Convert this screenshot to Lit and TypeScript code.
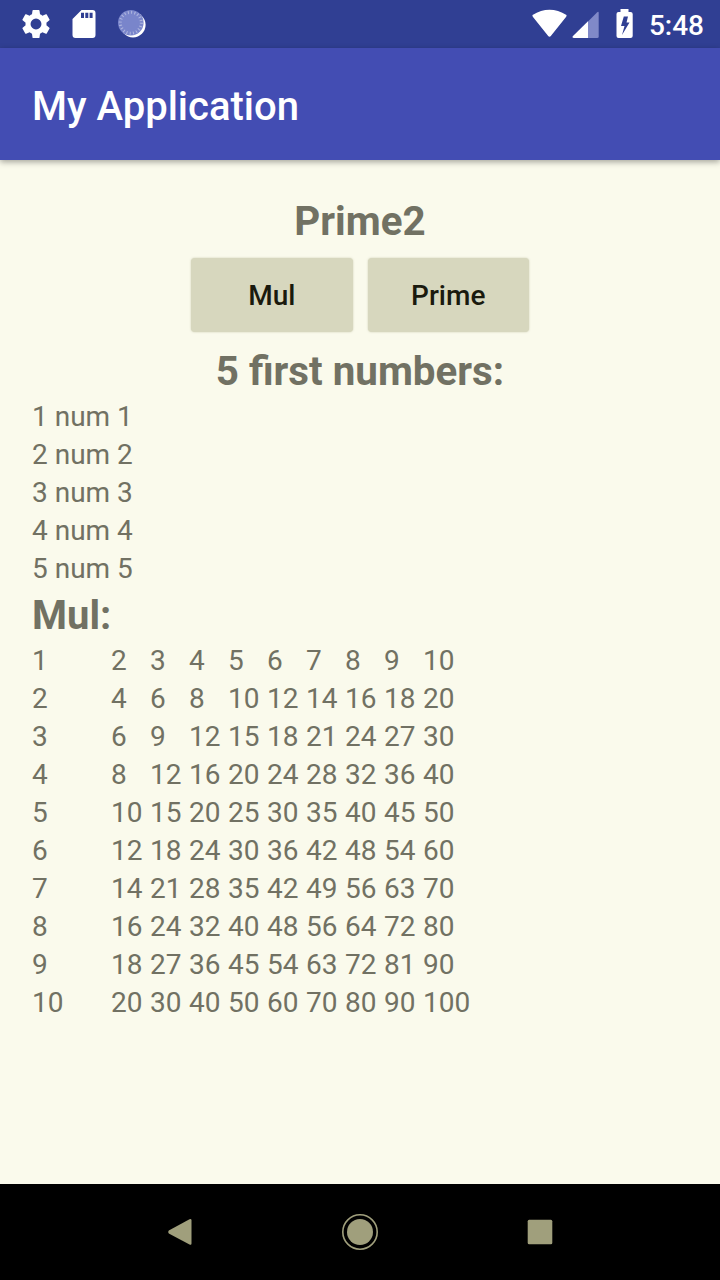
import { LitElement, html, css } from "lit";
import { customElement } from "lit/decorators.js";

const indexes = (n: number) => Array.from({ length: n }, (_, i) => i + 1);

@customElement("status-bar")
class StatusBar extends LitElement {
  static styles = css`
    :host { display: flex; justify-content: space-between; height: 48px; background: #303f93; color: #fff; }
    svg { display: block; }
    .clock { font: 500 28px/52px Roboto, sans-serif; padding-right: 16px; }
    .side { display: flex; }
  `;
  render() {
    return html`
      <svg width="160" height="48" fill="#fff">
        <path transform="translate(19.2 7.2) scale(1.4)" d="M19.43 12.98c.04-.32.07-.64.07-.98s-.03-.66-.07-.98l2.11-1.65c.19-.15.24-.42.12-.64l-2-3.46c-.12-.22-.39-.3-.61-.22l-2.49 1c-.52-.4-1.08-.73-1.69-.98l-.38-2.65A.49.49 0 0 0 14 2h-4c-.25 0-.46.18-.49.42l-.38 2.65c-.61.25-1.17.59-1.69.98l-2.49-1c-.23-.09-.49 0-.61.22l-2 3.46c-.13.22-.07.49.12.64l2.11 1.65c-.04.32-.07.65-.07.98s.03.66.07.98l-2.11 1.65c-.19.15-.24.42-.12.64l2 3.46c.12.22.39.3.61.22l2.49-1c.52.4 1.08.73 1.69.98l.38 2.65c.03.24.24.42.49.42h4c.25 0 .46-.18.49-.42l.38-2.65c.61-.25 1.17-.59 1.69-.98l2.49 1c.23.09.49 0 .61-.22l2-3.46c.12-.22.07-.49-.12-.64zM12 15.9a3.9 3.9 0 1 1 0-7.800 3.9 3.9 0 0 1 0 7.800z" />
        <path fill-rule="evenodd" d="M81.500 10H92.500Q95.500 10 95.500 13V35Q95.500 38 92.500 38H75.500Q72.500 38 72.500 35V19zM81 12.800V18H84V12.800zM85.300 12.800V18H88.300V12.800zM89.600 12.800V18H92.600V12.800z" />
        <circle cx="133" cy="24.800" r="12.600" />
        <circle cx="130.800" cy="22.800" r="12.800" fill="#7985cb" />
        <circle cx="130.800" cy="22.800" r="10.500" fill="none" stroke="#b0b7df" stroke-width="3" stroke-dasharray="1 2.300" />
      </svg>
      <div class="side">
        <svg width="122" height="48" fill="#fff">
          <g transform="translate(1.500 0)">
            <path d="M4 15Q21 4.500 38 15Q38.300 16 37.500 17L22.500 35.800Q21 37.800 19.500 35.800L4.500 17Q3.700 16 4 15z" />
            <path fill="#8089c8" d="M59 38V22L68.500 12.500Q70.200 11 70.200 13V36.500Q70.200 38 68.700 38z" />
            <path d="M45.500 38Q43 37.500 44.500 36L59.500 21.200V38z" />
            <path fill-rule="evenodd" d="M92 9H100V12H102Q104.200 12 104.200 14V36Q104.200 38 102 38H90Q88 38 88 36V14Q88 12 90 12H92zM95.300 16.500L92.500 26H96L93.500 35L101 22.500H98L99.500 16.500z" />
          </g>
        </svg>
        <div class="clock">5:48</div>
      </div>`;
  }
}

@customElement("nav-bar")
class NavBar extends LitElement {
  static styles = css`
    :host { display: flex; justify-content: center; height: 96px; background: #000; }
  `;
  render() {
    return html`
      <svg width="420" height="96" fill="#a09f7c">
        <path d="M18.800 46.500L39.500 35.200Q41.500 34.500 41.500 36.500V59.500Q41.500 61.500 39.500 60.500L18.800 49.500Q17.500 48 18.800 46.500z" />
        <circle cx="210" cy="48" r="13" />
        <circle cx="210" cy="48" r="17.200" fill="none" stroke="#a09f7c" stroke-width="1.600" />
        <rect x="377.700" y="35.700" width="24.600" height="24.600" rx="1.500" />
      </svg>`;
  }
}

@customElement("app-root")
class AppRoot extends LitElement {
  static styles = css`
    :host { display: flex; flex-direction: column; height: 1280px; background: #fafaec; color: #717163; font: 28px/38px Roboto, sans-serif; }
    .bar { height: 112px; background: #434db3; color: #fff; font: 500 40px/118px Roboto, sans-serif; padding-left: 32px; box-shadow: 0 2px 6px rgba(0, 0, 0, 0.35); }
    .content { flex: 1; padding: 33px 32px 0; }
    h2 { margin: 0; font: 700 40px/54px Roboto, sans-serif; }
    .center { text-align: center; font-size: 40.35px; }
    .first { line-height: 58px; }
    .sub { margin-bottom: -1px; }
    .mul { height: 54px; line-height: 56px; }
    .buttons { display: flex; justify-content: center; gap: 15px; padding: 7px 0 13px; }
    button { width: 161.5px; height: 74px; padding: 2px 0 0; border: 0; border-radius: 4px; background: #d7d7be; color: #1a1a0e; font: 500 28px/72px Roboto, sans-serif; box-shadow: 0 0 2px rgba(160, 160, 120, 0.5); }
    .row { display: grid; grid-template-columns: 79px repeat(8, 39px) 60px; }
  `;
  render() {
    return html`
      <status-bar></status-bar>
      <div class="bar">My Application</div>
      <div class="content">
        <h2 class="center first">Prime2</h2>
        <div class="buttons"><button>Mul</button><button>Prime</button></div>
        <h2 class="center sub">5 first numbers:</h2>
        ${indexes(5).map((n) => html`<div>${n} num ${n}</div>`)}
        <h2 class="mul">Mul:</h2>
        ${indexes(10).map((r) => html`<div class="row">${indexes(10).map((c) => html`<span>${r * c}</span>`)}</div>`)}
      </div>
      <nav-bar></nav-bar>`;
  }
}
